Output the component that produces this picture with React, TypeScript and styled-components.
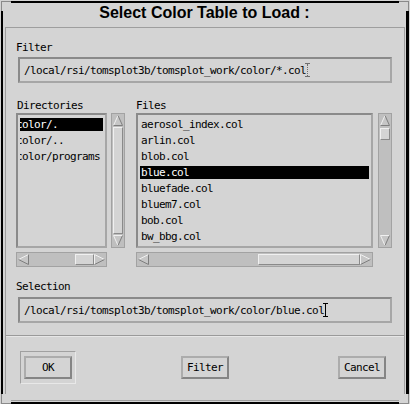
import React from "react";
import styled, { createGlobalStyle } from "styled-components";

const BG = "#d4d4d4";
const TROUGH = "#bfbfbf";
const DARK = "#8a8a8a";
const MID = "#a6a6a6";
const LIGHT = "#f0f0f0";
const MONO = `"DejaVu Sans Mono", "Liberation Mono", monospace`;

const GlobalStyle = createGlobalStyle`
  html, body { margin: 0; padding: 0; background: ${BG}; }
  body { width: 410px; height: 404px; overflow: hidden; }
`;

const Window = styled.div`
  position: relative;
  box-sizing: border-box;
  margin: 1px 0 0 1px;
  width: 408px;
  height: 403px;
  border-style: solid;
  border-color: #000;
  border-width: 2px 3px 2px 2px;
  background: ${BG};
  display: flex;
  flex-direction: column;
`;

type CornerPos = "tl" | "tr" | "bl" | "br";
const Corner = styled.span<{ $pos: CornerPos }>`
  position: absolute;
  box-sizing: border-box;
  width: 10px;
  height: 10px;
  background: ${BG};
  ${(p) => (p.$pos[0] === "t" ? "top: -2px; border-top: 1px solid #8a8a8a;" : "bottom: -2px; border-bottom: 1px solid #8a8a8a;")}
  ${(p) => (p.$pos[1] === "l" ? "left: -2px; border-left: 1px solid #8a8a8a;" : "right: -3px; border-right: 1px solid #8a8a8a;")}
`;

const Title = styled.div`
  height: 24px;
  font: bold 16px/20px "Liberation Sans", Arial, sans-serif;
  text-align: center;
  color: #000;
`;

const Panel = styled.div`
  flex: 1;
  margin: 0 1px 1px 2px;
  border: 1px solid #9e9e9e;
  display: flex;
  flex-direction: column;
`;

const FieldBlock = styled.div<{ $top: number }>`
  padding: ${(p) => p.$top}px 12px 0 12px;
  display: flex;
  flex-direction: column;
`;

const Label = styled.div<{ $indent: number }>`
  height: 13px;
  margin-left: ${(p) => p.$indent}px;
  font: 11px/13px ${MONO};
  letter-spacing: -0.62px;
  color: #000;
  white-space: nowrap;
`;

const TextField = styled.div<{ $gap: number }>`
  box-sizing: border-box;
  height: 26px;
  margin-top: ${(p) => p.$gap}px;
  border: 2px solid;
  border-color: ${DARK} ${MID} ${MID} ${DARK};
  padding: 0 4px;
  display: flex;
  align-items: center;
  font: 11px/13px ${MONO};
  letter-spacing: -0.62px;
  color: #000;
  white-space: nowrap;
  overflow: hidden;
`;

const Caret = styled.span<{ $active: boolean }>`
  position: relative;
  display: inline-block;
  box-sizing: border-box;
  width: 5px;
  height: 14px;
  margin-left: -1px;
  border-top: 1px solid ${(p) => (p.$active ? "#000" : "#6e6e6e")};
  border-bottom: 1px solid ${(p) => (p.$active ? "#000" : "#6e6e6e")};
  &::before {
    content: "";
    position: absolute;
    left: 2px;
    top: 0;
    bottom: 0;
    border-left: 1px ${(p) => (p.$active ? "solid #000" : "dotted #6e6e6e")};
  }
`;

const ListsRow = styled.div`
  margin-top: 16px;
  padding: 0 12px 0 10px;
  display: flex;
  gap: 11px;
`;

const Column = styled.div`
  display: flex;
  flex-direction: column;
`;

const ListAndBar = styled.div<{ $gap: number }>`
  margin-top: 1px;
  display: flex;
  gap: ${(p) => p.$gap}px;
`;

const ListBox = styled.div<{ $width: number }>`
  box-sizing: border-box;
  width: ${(p) => p.$width}px;
  height: 135px;
  border: 2px solid;
  border-color: ${DARK} ${MID} ${MID} ${DARK};
  padding: 3px 2px;
  display: flex;
  flex-direction: column;
  gap: 3px;
  overflow: hidden;
`;

const Row = styled.div<{ $selected: boolean }>`
  height: 13px;
  flex: none;
  overflow: hidden;
  white-space: nowrap;
  font: 11px/13px ${MONO};
  letter-spacing: -0.62px;
  background: ${(p) => (p.$selected ? "#000" : "transparent")};
  color: ${(p) => (p.$selected ? "#fff" : "#000")};
`;

const RowText = styled.span<{ $offset: number }>`
  display: inline-block;
  margin-left: ${(p) => p.$offset}px;
`;

const Bar = styled.div<{ $vertical: boolean }>`
  box-sizing: border-box;
  ${(p) => (p.$vertical ? "width: 14px; height: 135px;" : "height: 15px; width: 100%; margin-top: 4px;")}
  border: 1px solid #a2a2a2;
  padding: 1px;
  background: ${TROUGH};
  display: flex;
  flex-direction: ${(p) => (p.$vertical ? "column" : "row")};
`;

const Track = styled.div<{ $vertical: boolean }>`
  flex: 1;
  min-width: 0;
  min-height: 0;
  display: flex;
  flex-direction: ${(p) => (p.$vertical ? "column" : "row")};
  padding: ${(p) => (p.$vertical ? "1px 0" : "0 0 0 1px")};
`;

const Spacer = styled.div`
  flex-basis: 0;
  min-width: 0;
  min-height: 0;
`;

const Thumb = styled.div`
  box-sizing: border-box;
  flex-basis: 0;
  min-width: 0;
  min-height: 0;
  background: ${BG};
  border: 1px solid;
  border-color: ${LIGHT} ${DARK} ${DARK} ${LIGHT};
`;

const ArrowSvg = styled.svg<{ $vertical: boolean }>`
  display: block;
  flex: none;
  width: ${(p) => (p.$vertical ? "10px" : "11px")};
  height: 11px;
`;

const Separator = styled.div`
  margin-top: 12px;
  height: 2px;
  box-sizing: border-box;
  border-top: 1px solid #9a9a9a;
  border-bottom: 1px solid #e6e6e6;
`;

const ButtonRow = styled.div`
  padding: 14px 18px 0 14px;
  display: flex;
  align-items: center;
`;

const DefaultFrame = styled.div`
  box-sizing: border-box;
  width: 56px;
  height: 33px;
  padding: 4px 3px;
  border: 1px solid;
  border-color: #a0a0a0 #e8e8e8 #e8e8e8 #a0a0a0;
`;

const Button = styled.button<{ $push?: "gap" | "auto" }>`
  box-sizing: border-box;
  width: 48px;
  height: 23px;
  margin: 0;
  margin-left: ${(p) => (p.$push === "gap" ? "105px" : p.$push === "auto" ? "auto" : "0")};
  padding: 0;
  border: 2px solid;
  border-color: #acacac #858585 #858585 #acacac;
  background: ${BG};
  color: #000;
  font: 11px/13px ${MONO};
  letter-spacing: -0.62px;
  text-align: center;
  cursor: pointer;
`;

type Dir = "up" | "down" | "left" | "right";

function Arrow({ dir }: { dir: Dir }) {
  const vertical = dir === "up" || dir === "down";
  const w = vertical ? 10 : 11;
  const h = 11;
  let pts: [number, number][];
  let lightEdges: [number, number][][];
  let darkEdges: [number, number][][];
  if (dir === "up") {
    pts = [[5, 0.5], [9.5, 10.5], [0.5, 10.5]];
    lightEdges = [[pts[2], pts[0]]];
    darkEdges = [[pts[0], pts[1]], [pts[1], pts[2]]];
  } else if (dir === "down") {
    pts = [[0.5, 0.5], [9.5, 0.5], [5, 10.5]];
    lightEdges = [[pts[0], pts[1]], [pts[2], pts[0]]];
    darkEdges = [[pts[1], pts[2]]];
  } else if (dir === "left") {
    pts = [[0.5, 5.5], [10.5, 0.5], [10.5, 10.5]];
    lightEdges = [[pts[0], pts[1]]];
    darkEdges = [[pts[1], pts[2]], [pts[2], pts[0]]];
  } else {
    pts = [[0.5, 0.5], [10.5, 5.5], [0.5, 10.5]];
    lightEdges = [[pts[0], pts[1]], [pts[2], pts[0]]];
    darkEdges = [[pts[1], pts[2]]];
  }
  return (
    <ArrowSvg $vertical={vertical} viewBox={`0 0 ${w} ${h}`}>
      <polygon points={pts.map((p) => p.join(",")).join(" ")} fill="#c6c6c6" />
      {lightEdges.map(([a, b], i) => (
        <line key={"l" + i} x1={a[0]} y1={a[1]} x2={b[0]} y2={b[1]} stroke={LIGHT} strokeWidth={1} />
      ))}
      {darkEdges.map(([a, b], i) => (
        <line key={"d" + i} x1={a[0]} y1={a[1]} x2={b[0]} y2={b[1]} stroke="#7e7e7e" strokeWidth={1} />
      ))}
    </ArrowSvg>
  );
}

function ScrollBar({ vertical, start, size }: { vertical: boolean; start: number; size: number }) {
  const rest = Math.max(0, 1 - start - size);
  return (
    <Bar $vertical={vertical}>
      <Arrow dir={vertical ? "up" : "left"} />
      <Track $vertical={vertical}>
        <Spacer style={{ flexGrow: start }} />
        <Thumb style={{ flexGrow: size }} />
        <Spacer style={{ flexGrow: rest }} />
      </Track>
      <Arrow dir={vertical ? "down" : "right"} />
    </Bar>
  );
}

interface ListProps {
  title: string;
  titleIndent: number;
  width: number;
  barGap: number;
  items: string[];
  selected: number;
  textOffset: number;
  vScroll: { start: number; size: number };
  hScroll: { start: number; size: number };
}

function ScrolledList(p: ListProps) {
  return (
    <Column>
      <Label $indent={p.titleIndent}>{p.title}</Label>
      <ListAndBar $gap={p.barGap}>
        <ListBox $width={p.width}>
          {p.items.map((it, i) => (
            <Row key={it} $selected={i === p.selected}>
              <RowText $offset={p.textOffset}>{it}</RowText>
            </Row>
          ))}
        </ListBox>
        <ScrollBar vertical start={p.vScroll.start} size={p.vScroll.size} />
      </ListAndBar>
      <div style={{ width: p.width }}>
        <ScrollBar vertical={false} start={p.hScroll.start} size={p.hScroll.size} />
      </div>
    </Column>
  );
}

const dirs = ["color/.", "color/..", "color/programs"];
const files = [
  "aerosol_index.col",
  "arlin.col",
  "blob.col",
  "blue.col",
  "bluefade.col",
  "bluem7.col",
  "bob.col",
  "bw_bbg.col",
];

export default function App() {
  return (
    <>
      <GlobalStyle />
      <Window>
        <Corner $pos="tl" />
        <Corner $pos="tr" />
        <Corner $pos="bl" />
        <Corner $pos="br" />
        <Title>Select Color Table to Load :</Title>
        <Panel>
          <FieldBlock $top={13}>
            <Label $indent={-2}>Filter</Label>
            <TextField $gap={3}>
              <span>/local/rsi/tomsplot3b/tomsplot_work/color/*.col</span>
              <Caret $active={false} />
            </TextField>
          </FieldBlock>
          <ListsRow>
            <ScrolledList
              title="Directories"
              titleIndent={1}
              width={91}
              barGap={4}
              items={dirs}
              selected={0}
              textOffset={-4}
              vScroll={{ start: 0, size: 1 }}
              hScroll={{ start: 0.73, size: 0.27 }}
            />
            <ScrolledList
              title="Files"
              titleIndent={0}
              width={237}
              barGap={5}
              items={files}
              selected={3}
              textOffset={1}
              vScroll={{ start: 0.01, size: 0.095 }}
              hScroll={{ start: 0.52, size: 0.48 }}
            />
          </ListsRow>
          <FieldBlock $top={13}>
            <Label $indent={-2}>Selection</Label>
            <TextField $gap={4}>
              <span>/local/rsi/tomsplot3b/tomsplot_work/color/blue.col</span>
              <Caret $active />
            </TextField>
          </FieldBlock>
          <Separator />
          <ButtonRow>
            <DefaultFrame>
              <Button>OK</Button>
            </DefaultFrame>
            <Button $push="gap">Filter</Button>
            <Button $push="auto">Cancel</Button>
          </ButtonRow>
        </Panel>
      </Window>
    </>
  );
}
